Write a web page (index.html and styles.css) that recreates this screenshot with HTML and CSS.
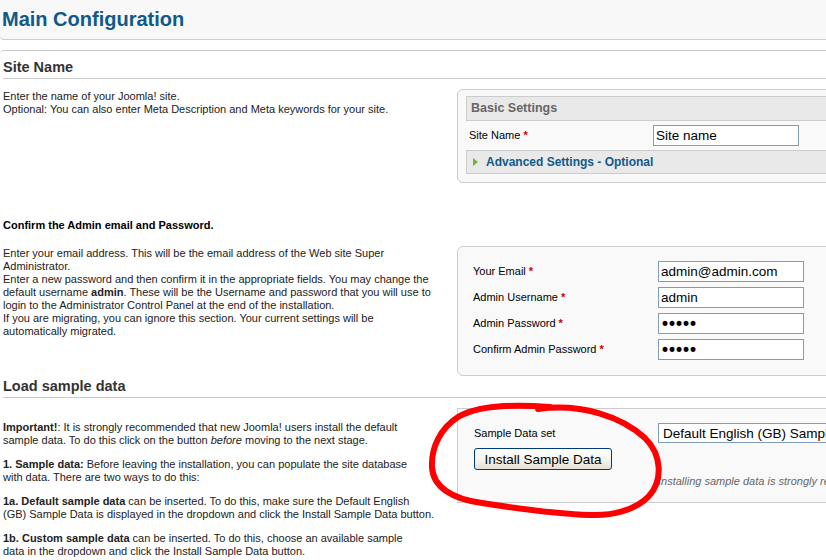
FILE: index.html
```html
<!DOCTYPE html>
<html lang="en">
<head>
<meta charset="utf-8">
<title>Main Configuration</title>
<link rel="stylesheet" href="styles.css">
</head>
<body>
<div class="page">
  <header class="topbar">
    <h1 class="title">Main Configuration</h1>
  </header>

  <main class="content">
    <h2 class="section-title">Site Name</h2>
    <div class="row">
      <div class="desc">
        Enter the name of your Joomla! site.<br>
        Optional: You can also enter Meta Description and Meta keywords for your site.
      </div>
      <div class="panel panel-site">
        <div class="panel-head">Basic Settings</div>
        <div class="field-grid grid-site">
          <label class="field-label">Site Name <span class="req">*</span></label>
          <input class="field-input" type="text" value="Site name">
        </div>
        <div class="panel-toggle"><span class="arrow"></span>Advanced Settings - Optional</div>
      </div>
    </div>

    <h3 class="sub-title">Confirm the Admin email and Password.</h3>
    <div class="row">
      <div class="desc">
        Enter your email address. This will be the email address of the Web site Super<br>
        Administrator.<br>
        Enter a new password and then confirm it in the appropriate fields. You may change the<br>
        default username <b>admin</b>. These will be the Username and password that you will use to<br>
        login to the Administrator Control Panel at the end of the installation.<br>
        If you are migrating, you can ignore this section. Your current settings will be<br>
        automatically migrated.
      </div>
      <div class="panel panel-admin">
        <div class="field-grid grid-admin">
          <label class="field-label">Your Email <span class="req">*</span></label>
          <input class="field-input" type="text" value="admin@admin.com">
          <label class="field-label">Admin Username <span class="req">*</span></label>
          <input class="field-input" type="text" value="admin">
          <label class="field-label">Admin Password <span class="req">*</span></label>
          <input class="field-input field-pass" type="password" value="admin">
          <label class="field-label">Confirm Admin Password <span class="req">*</span></label>
          <input class="field-input field-pass" type="password" value="admin">
        </div>
      </div>
    </div>

    <h2 class="section-title section-title-2">Load sample data</h2>
    <div class="row">
      <div class="desc desc-paras">
        <p><b>Important!</b>: It is strongly recommended that new Joomla! users install the default<br>sample data. To do this click on the button <i>before</i> moving to the next stage.</p>
        <p><b>1. Sample data:</b> Before leaving the installation, you can populate the site database<br>with data. There are two ways to do this:</p>
        <p><b>1a. Default sample data</b> can be inserted. To do this, make sure the Default English<br>(GB) Sample Data is displayed in the dropdown and click the Install Sample Data button.</p>
        <p><b>1b. Custom sample data</b> can be inserted. To do this, choose an available sample<br>data in the dropdown and click the Install Sample Data button.</p>
      </div>
      <div class="panel panel-sample">
        <div class="field-grid grid-sample">
          <label class="field-label">Sample Data set</label>
          <select class="field-select"><option>Default English (GB) Sample Data</option></select>
          <button class="btn" type="button">Install Sample Data</button>
          <span></span>
          <span></span>
          <span class="note">Installing sample data is strongly recommended.</span>
        </div>
      </div>
    </div>
  </main>

  <svg class="annotation" width="826" height="560" viewBox="0 0 826 560" aria-hidden="true">
    <defs>
      <filter id="soft" x="-10%" y="-10%" width="120%" height="120%">
        <feGaussianBlur stdDeviation="0.7"/>
      </filter>
    </defs>
    <path filter="url(#soft)" d="M 538 409 C 582 403, 622 417, 645 438 C 662 455, 663 480, 649 496 C 636 510, 612 516, 590 515 C 558 514, 520 509, 482 503 C 452 499, 433 487, 432 467 C 431 447, 441 428, 458 417 C 478 405, 512 404, 550 407"
      fill="none" stroke="#ff0000" stroke-width="6" stroke-linecap="round" stroke-linejoin="round"/>
  </svg>
</div>
</body>
</html>
```

FILE: styles.css
```css
html, body {
  margin: 0;
  padding: 0;
  overflow: hidden;
  background: #ffffff;
}

body {
  font-family: "Liberation Sans", Arial, sans-serif;
  font-size: 11px;
  color: #222;
}

.page {
  position: relative;
  width: 826px;
  height: 560px;
  overflow: hidden;
}

.topbar {
  background: #f8f8f8;
  border-bottom: 1px solid #cccccc;
  border-bottom-left-radius: 4px;
  height: 40px;
  box-sizing: border-box;
  padding: 8px 0 0 2px;
}

.title {
  margin: 0;
  font-size: 20px;
  line-height: 22px;
  font-weight: bold;
  color: #0f5a8c;
}

.content {
  margin-top: 10px;
  border-top: 1px solid #cccccc;
  border-top-left-radius: 4px;
  padding-top: 7px;
}

.section-title {
  margin: 0 0 10px 3px;
  font-size: 14.5px;
  line-height: 19px;
  font-weight: bold;
  color: #333;
  padding-bottom: 1px;
  border-bottom: 1px solid #cccccc;
}

.section-title-2 {
  margin-top: 1px;
}

.sub-title {
  margin: 36px 0 14px 3px;
  font-size: 11px;
  line-height: 13px;
  font-weight: bold;
  color: #000;
}

.row {
  display: flex;
  gap: 18px;
  padding-left: 3px;
}

.desc {
  flex: 0 0 436px;
  line-height: 13px;
  padding-top: 1px;
  color: #222;
  white-space: nowrap;
}

.desc-paras {
  padding-top: 0;
}

.desc-paras p {
  margin: 11px 0 0;
}

.desc-paras p:first-child {
  margin-top: 13px;
}

.panel {
  flex: 0 0 420px;
  border: 1px solid #cccccc;
  border-radius: 6px;
  background: #f9f9f9;
  box-sizing: border-box;
}

.panel-site {
  padding: 6px 8px 8px 8px;
}

.panel-admin {
  padding: 14px 15px 15px 15px;
  align-self: flex-start;
}

.panel-sample {
  padding: 14px 15px 14px 16px;
  align-self: flex-start;
  border-radius: 0;
}

.panel-head {
  height: 25px;
  box-sizing: border-box;
  border: 1px solid #cccccc;
  background: #e9e9e9;
  padding-left: 4px;
  font-size: 12.5px;
  line-height: 23px;
  font-weight: bold;
  color: #666;
}

.panel-toggle {
  height: 24px;
  box-sizing: border-box;
  border: 1px solid #cccccc;
  background: #e9e9e9;
  padding-left: 6px;
  font-size: 12px;
  line-height: 22px;
  font-weight: bold;
  color: #0f5a8c;
  display: flex;
  align-items: center;
}

.arrow {
  width: 0;
  height: 0;
  border-top: 4px solid transparent;
  border-bottom: 4px solid transparent;
  border-left: 5px solid #74b43c;
  margin-right: 8px;
}

.field-grid {
  display: grid;
  row-gap: 5px;
  align-items: center;
}

.grid-site {
  grid-template-columns: 184px 146px;
  margin: 4px 0;
  padding-left: 3px;
}

.grid-admin {
  grid-template-columns: 185px 146px;
}

.grid-sample {
  grid-template-columns: 184px 240px;
}

.field-label {
  font-size: 11px;
  line-height: 13px;
  color: #000;
}

.req {
  color: #cc0000;
  font-weight: bold;
}

.field-input {
  height: 21px;
  width: 146px;
  box-sizing: border-box;
  border: 1px solid #7f9db9;
  background: #fff;
  padding: 0 2px;
  margin: 0;
  font-family: "Liberation Sans", Arial, sans-serif;
  font-size: 13.5px;
  color: #000;
  outline: none;
}

.field-pass {
  font-family: "DejaVu Sans", sans-serif;
  font-size: 17px;
  letter-spacing: -3px;
  padding-left: 1px;
}

.field-select {
  -webkit-appearance: none;
  appearance: none;
  height: 20px;
  width: 240px;
  box-sizing: border-box;
  border: 1px solid #7f9db9;
  border-radius: 0;
  background: #fff;
  padding: 0 4px;
  margin: 0;
  font-family: "Liberation Sans", Arial, sans-serif;
  font-size: 13.5px;
  color: #000;
}

.btn {
  width: 138px;
  height: 22px;
  box-sizing: border-box;
  border: 1px solid #003c74;
  border-radius: 3px;
  background: linear-gradient(#ffffff, #f3f2ec 60%, #e3e1d6);
  font-family: "Liberation Sans", Arial, sans-serif;
  font-size: 13.5px;
  color: #000;
  padding: 0;
  margin: 0;
}

.note {
  font-size: 11px;
  line-height: 13px;
  font-style: italic;
  color: #666;
  white-space: nowrap;
}

.annotation {
  position: absolute;
  left: 0;
  top: 0;
  pointer-events: none;
}
```
